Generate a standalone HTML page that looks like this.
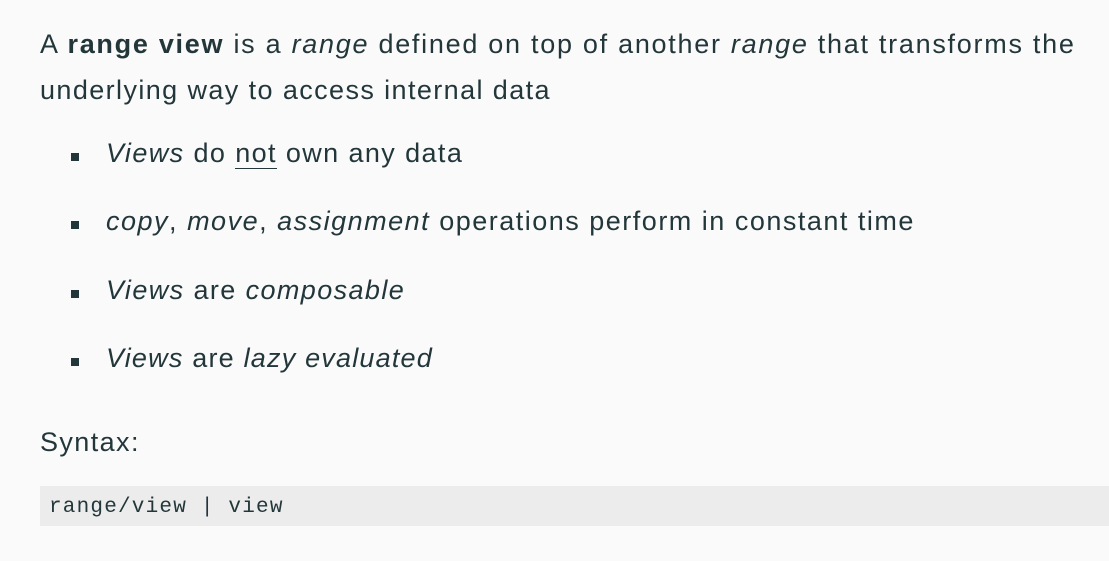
<!DOCTYPE html>
<html><head><style>
body{margin:0;width:1109px;height:561px;background:#fafafa;overflow:hidden;font-family:"Liberation Sans",sans-serif;color:#23373b;position:relative}
.l{position:absolute;white-space:nowrap;font-size:27px;line-height:30px;letter-spacing:1.4px}
.b{position:absolute;left:71px;width:8px;height:8px;background:#23373b}
code{font-family:"Liberation Mono",monospace}
</style></head><body>
<div class="l" style="left:40px;top:29px;letter-spacing:1.72px">A <b>range view</b> is a <i>range</i> defined on top of another <i>range</i> that transforms the</div>
<div class="l" style="left:40px;top:75px">underlying way to access internal data</div>
<div class="b" style="top:153px"></div>
<div class="l" style="left:106px;top:138px"><i>Views</i> do <span style="border-bottom:1px solid #23373b">not</span> own any data</div>
<div class="b" style="top:221px"></div>
<div class="l" style="left:106px;top:206px;letter-spacing:1.5px"><i>copy</i>, <i>move</i>, <i>assignment</i> operations perform in constant time</div>
<div class="b" style="top:290px"></div>
<div class="l" style="left:106px;top:275px"><i>Views</i> are <i>composable</i></div>
<div class="b" style="top:358px"></div>
<div class="l" style="left:106px;top:343px;letter-spacing:1.2px"><i>Views</i> are <i>lazy evaluated</i></div>
<div class="l" style="left:40px;top:427px">Syntax:</div>
<div style="position:absolute;left:40px;top:486px;width:1069px;height:40px;background:#ececec"></div>
<div class="l" style="left:49px;top:491px;font-size:21px;letter-spacing:1.2px"><code>range/view | view</code></div>
</body></html>
